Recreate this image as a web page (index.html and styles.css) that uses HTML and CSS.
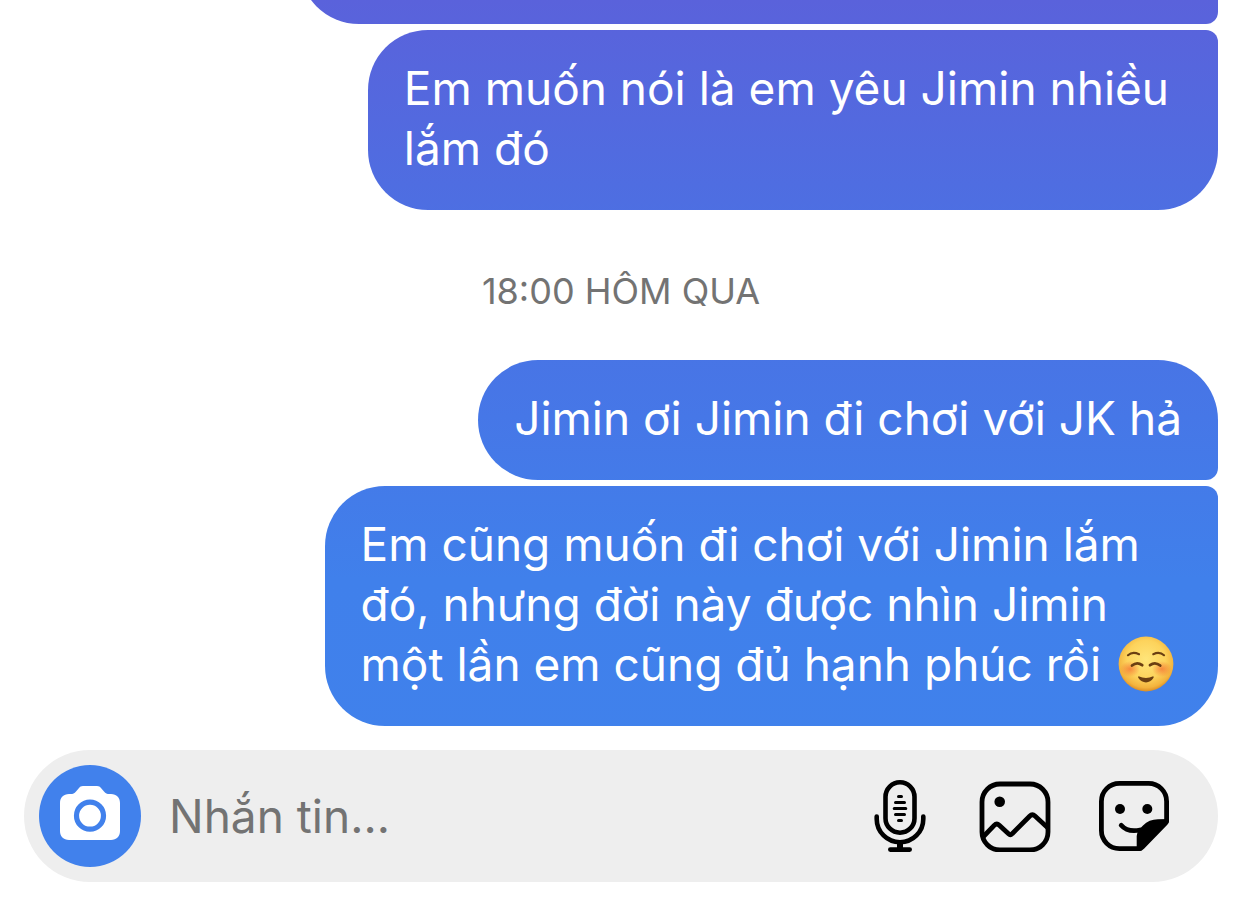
FILE: index.html
```
<!DOCTYPE html>
<html lang="vi">
<head>
  <meta charset="UTF-8">
  <meta name="viewport" content="width=device-width, initial-scale=1.0">
  <title>Tin nhắn</title>
  <link rel="stylesheet" href="styles.css">
</head>
<body>

  <main class="chat">
    <!-- Earlier message, scrolled off the top -->
    <div class="bubble first earlier"></div>
    <div class="bubble last">Em muốn nói là em yêu Jimin nhiều <br>lắm đó</div>

    <div class="timestamp">18:00 HÔM QUA</div>

    <div class="bubble first">Jimin ơi Jimin đi chơi với JK hả</div>
    <div class="bubble last">Em cũng muốn đi chơi với Jimin lắm <br>đó, nhưng đời này được nhìn Jimin <br>một lần em cũng đủ hạnh phúc rồi <svg class="emoji" viewBox="0 0 56 56" role="img" aria-label="Mặt cười">
        <defs>
          <radialGradient id="face" cx="50%" cy="42%" r="58%">
            <stop offset="0" stop-color="#ffe57a"/>
            <stop offset="0.6" stop-color="#fdd35c"/>
            <stop offset="0.88" stop-color="#f3b33d"/>
            <stop offset="1" stop-color="#dc8d25"/>
          </radialGradient>
          <radialGradient id="cheek">
            <stop offset="0" stop-color="#f2622d" stop-opacity="0.65"/>
            <stop offset="1" stop-color="#f2622d" stop-opacity="0"/>
          </radialGradient>
        </defs>
        <circle cx="28" cy="28" r="27.4" fill="url(#face)"/>
        <ellipse cx="12" cy="33" rx="10" ry="8" fill="url(#cheek)"/>
        <ellipse cx="44" cy="33" rx="10" ry="8" fill="url(#cheek)"/>
        <g fill="none" stroke="#6b3f12" stroke-width="2.2" stroke-linecap="round">
          <path d="M10 19.2Q14.5 15.2 21 18.2M35.3 18.2Q41.5 15.2 46 19.2"/>
          <path stroke-width="2.8" d="M14 29.5Q19 25.3 24.2 29.2M32 29.2Q37 25.3 42.2 29.5"/>
        </g>
        <path fill="#6b3f12" d="M20.6 40.2Q28 43.8 35.2 40.2Q36.2 40.6 35.4 42Q32.4 46.4 28 46.4Q23.4 46.4 20.4 42Q19.6 40.6 20.6 40.2Z"/>
      </svg></div>
  </main>

  <form class="composer">
    <button type="button" class="camera" aria-label="Máy ảnh">
      <svg width="60" height="60" viewBox="0 0 60 60">
        <path fill="#fff" d="M23 0H37C39 0 40 .8 41.2 2.2L44 5.5C45.6 7.4 47 8 49.5 8H51C56.5 8 60 11.5 60 17V45C60 50.5 56.5 54 51 54H9C3.5 54 0 50.5 0 45V17C0 11.5 3.5 8 9 8H10.500C13 8 14.4 7.4 16 5.5L18.8 2.2C20 .8 21 0 23 0Z"/>
        <circle cx="30" cy="29.7" r="13.5" fill="none" stroke="#4181ec" stroke-width="5.2"/>
      </svg>
    </button>
    <input type="text" class="message" placeholder="Nhắn tin..." aria-label="Nhắn tin">
    <button type="button" class="tool" aria-label="Ghi âm">
      <svg width="64" height="72" viewBox="0 0 64 72" fill="none" stroke="#000" stroke-linecap="round">
        <rect x="17.5" y="2.3" width="29" height="50.4" rx="14.5" stroke-width="4.6"/>
        <path stroke-width="3" d="M30.5 16.4H33.5M27.5 22.6H36.5M26.2 28.5H37.8M27.5 34.4H36.5M30.5 40.4H33.5"/>
        <path stroke-width="4.6" d="M8.7 36.5V39A23.3 23.3 0 0 0 55.3 39V36.5M22.3 69.6H41.7"/>
        <path stroke-width="6" stroke-linecap="butt" d="M32 61V70"/>
      </svg>
    </button>
    <button type="button" class="tool" aria-label="Ảnh">
      <svg width="72" height="72" viewBox="0 0 72 72" fill="none" stroke="#000" stroke-width="4.8">
        <rect x="3" y="4" width="66" height="66" rx="18"/>
        <circle cx="20.7" cy="21.7" r="5.3" fill="#000" stroke="none"/>
        <path d="M4 57L15.2 45.4Q17.7 42.8 20.3 45.2L29.5 53.8Q31.4 55.6 33.2 53.7L50.6 36.2Q53.3 33.6 56 36L69 48"/>
      </svg>
    </button>
    <button type="button" class="tool" aria-label="Nhãn dán">
      <svg width="72" height="72" viewBox="0 0 72 72" fill="none" stroke="#000" stroke-width="4.8" stroke-linecap="round">
        <path d="M68.600 41V21.400A18 18 0 0 0 50.600 3.400H21.400A18 18 0 0 0 3.400 21.400V50.600A18 18 0 0 0 21.400 68.600H42"/>
        <circle cx="22" cy="29" r="5" fill="#000" stroke="none"/>
        <circle cx="49.3" cy="29" r="5" fill="#000" stroke="none"/>
        <path d="M23.2 45.2Q29.5 52.5 42 50"/>
        <path fill="#000" stroke="none" d="M71 39V41Q71 43 69.3 44.8L46 68.8Q44 71 41 71H38.7V56Q38.7 52 41.5 49L45 45.5Q51 39.3 60 39.2Z"/>
      </svg>
    </button>
  </form>

</body>
</html>
```
FILE: styles.css
```
* {
  box-sizing: border-box;
}

body {
  margin: 0;
  height: 100vh;
  padding: 0 24px 24px;
  display: flex;
  flex-direction: column;
  gap: 24px;
  background: #fff;
  font-family: Inter, "Noto Sans", sans-serif;
}

.chat {
  flex: 1;
  min-height: 0;
  overflow: hidden;
  display: flex;
  flex-direction: column;
  justify-content: flex-end;
  align-items: flex-end;
  gap: 6px;
}

.bubble {
  flex-shrink: 0;
  max-width: 78%;
  min-height: 120px;
  padding: 28px 36px 32px;
  border-radius: 60px;
  /* one gradient runs behind every bubble */
  background: linear-gradient(#5a62db 0%, #4d6fe2 24%, #4677e7 46%, #4080eb 64%, #4082ec 100%) fixed;
  color: #fff;
  font-size: 46px;
  line-height: 60px;
  white-space: break-spaces;
}

.first {
  border-bottom-right-radius: 12px;
}

.last {
  border-top-right-radius: 12px;
}

.earlier {
  width: 77%;
}

.timestamp {
  align-self: center;
  margin: 54px 0 42px;
  color: #737373;
  font-size: 36px;
  line-height: 42px;
}

.emoji {
  width: 56px;
  height: 56px;
  margin: -10px 8px -10px 4px;
  vertical-align: -1px;
}

.composer {
  display: flex;
  align-items: center;
  height: 132px;
  padding: 0 48px 0 15px;
  border-radius: 66px;
  background: #eee;
}

button {
  flex-shrink: 0;
  padding: 0;
  border: none;
  background: none;
  cursor: pointer;
}

button svg {
  display: block;
}

.camera {
  width: 102px;
  height: 102px;
  display: flex;
  align-items: center;
  justify-content: center;
  border-radius: 50%;
  background: #4181ec;
}

.message {
  flex: 1;
  min-width: 0;
  padding: 0 24px 0 28px;
  border: none;
  outline: none;
  background: none;
  color: #000;
  font-family: inherit;
  font-size: 46px;
  line-height: 60px;
}

.message::placeholder {
  color: #737373;
}

.tool + .tool {
  margin-left: 47px;
}
```
